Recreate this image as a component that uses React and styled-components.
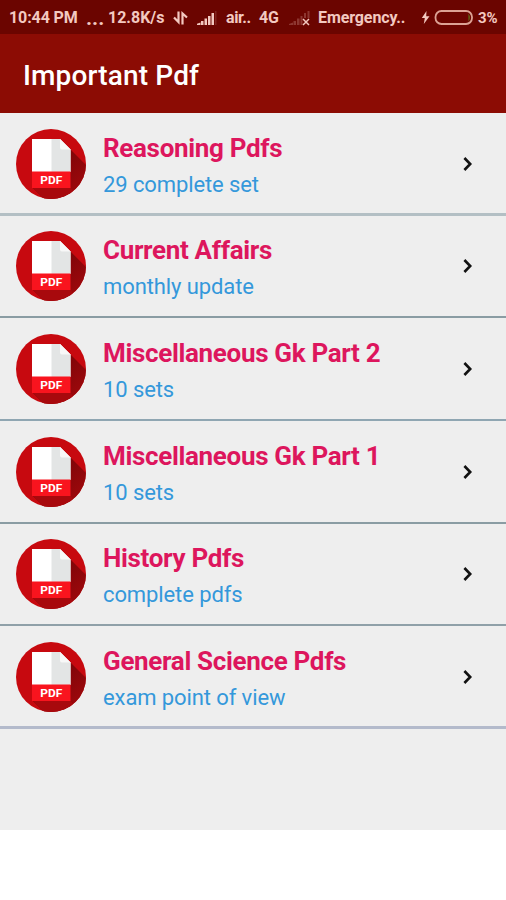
import React from 'react';
import styled, { createGlobalStyle } from 'styled-components';

const GlobalStyle = createGlobalStyle`
  body {
    margin: 0;
    background: #ffffff;
    font-family: Roboto, "Liberation Sans", sans-serif;
  }
`;

const Screen = styled.div`
  width: 506px;
  height: 830px;
  overflow: hidden;
  background: #eeeeee;
`;

const StatusBar = styled.div`
  display: flex;
  align-items: center;
  box-sizing: border-box;
  height: 34px;
  padding-left: 9px;
  background: #6b0500;
  color: #f3c9c0;
`;

const StatusText = styled.span`
  flex: none;
  width: ${props => props.$width}px;
  font-size: ${props => props.$size || 16}px;
  font-weight: 700;
  letter-spacing: ${props => props.$spacing || 0}px;
  line-height: 34px;
  padding-top: 2px;
  white-space: nowrap;
`;

const StatusIcon = styled.svg`
  flex: none;
  display: block;
  height: 34px;
  width: ${props => props.$width}px;
`;

const TitleBar = styled.div`
  display: flex;
  align-items: center;
  box-sizing: border-box;
  height: 79px;
  padding: 4px 0 0 23px;
  background: #8c0c04;
`;

const Title = styled.h1`
  margin: 0;
  font-size: 28px;
  font-weight: 500;
  line-height: 32px;
  letter-spacing: 0.15px;
  color: #ffffff;
`;

const Row = styled.div`
  display: flex;
  align-items: flex-start;
  box-sizing: border-box;
  height: 102.67px;
  padding: 14.8px 32px 0 15px;
  background: linear-gradient(${props => props.$line}, ${props => props.$line}) 0 100% / 100% ${props => (props.$thick ? 3 : 2)}px no-repeat;
`;

const PdfBadge = styled.svg`
  flex: none;
  display: block;
  width: 72px;
  height: 72px;
`;

const RowText = styled.div`
  flex: 1;
  padding: 3.8px 0 0 16px;
`;

const RowTitle = styled.div`
  font-size: 26px;
  font-weight: 700;
  line-height: 32px;
  letter-spacing: -0.33px;
  color: #dd165d;
`;

const RowSubtitle = styled.div`
  margin-top: 7px;
  font-size: 22px;
  line-height: 28px;
  letter-spacing: -0.1px;
  color: #3498db;
`;

const Chevron = styled.svg`
  flex: none;
  width: 12px;
  height: 16px;
  margin-top: 28px;
`;

const PdfIcon = () => (
  <PdfBadge viewBox="0 0 72 72">
    <defs>
      <clipPath id="disc"><circle cx="36" cy="36" r="35" /></clipPath>
      <linearGradient id="shade" x1="0" y1="0" x2="1" y2="1">
        <stop offset="0.3" stopColor="#7c0508" />
        <stop offset="1" stopColor="#a8090d" />
      </linearGradient>
    </defs>
    <circle cx="36" cy="36" r="35" fill="#c7090f" />
    <g clipPath="url(#disc)">
      <path d="M55 21L72 38V72H30L17 59H55Z" fill="url(#shade)" />
      <path d="M17 59H55L64 72H30Z" fill="#a8090d" />
    </g>
    <path d="M17 11H45L55.5 21.5V44H17Z" fill="#ffffff" />
    <path d="M36.5 11H45L55.5 21.5V44H36.5Z" fill="#e3e5e5" />
    <path d="M45 11L55.5 21.5H47Q45 21.5 45 19.5Z" fill="#f8f8f8" />
    <path d="M17 43.5H55.5V60H17Z" fill="#f9141e" />
    <text
      x="36.2"
      y="55.8"
      textAnchor="middle"
      textLength="22"
      lengthAdjust="spacingAndGlyphs"
      fill="#ffffff"
      fontFamily="Roboto, sans-serif"
      fontWeight="700"
      fontSize="10.8"
    >
      PDF
    </text>
  </PdfBadge>
);

const DataArrows = () => (
  <StatusIcon $width={24} viewBox="0 0 24 34" fill="none" stroke="#f3c9c0" strokeWidth="2.2">
    <path d="M5.5 11.5V22L1 17.5" />
    <path d="M9.5 24.5V13.5L14 17.5" />
  </StatusIcon>
);

const Signal = () => (
  <StatusIcon $width={29} viewBox="0 0 29 34" fill="#f3c9c0">
    <path d="M-1 24L3.5 22.5V25H-1Z" />
    <rect x="4" y="21" width="2.5" height="4" />
    <rect x="7.5" y="18.5" width="2.5" height="6.5" />
    <rect x="11" y="16" width="2.5" height="9" />
    <rect x="14.5" y="13" width="2.5" height="12" />
    <rect x="18.2" y="11" width="1.2" height="14" opacity="0.2" />
  </StatusIcon>
);

const NoSignal = () => (
  <StatusIcon $width={29} viewBox="0 0 29 34">
    <g fill="#f3c9c0" opacity="0.25">
      <path d="M0 24L4 22.5V25H0Z" />
      <rect x="4.5" y="21" width="2.5" height="4" />
      <rect x="8" y="18.5" width="2.5" height="6.5" />
      <rect x="11.5" y="16" width="2" height="9" />
      <rect x="15" y="13" width="2" height="5" />
      <rect x="18.5" y="11" width="2" height="7" />
    </g>
    <path d="M14 19L20 25M20 19L14 25" stroke="#f3c9c0" strokeWidth="1.5" />
  </StatusIcon>
);

const Battery = () => (
  <StatusIcon $width={57} viewBox="0 0 57 34">
    <path d="M5.5 11L0.8 18H3.8L2.8 24L8.5 16.2H5.2Z" fill="#f3c9c0" />
    <rect x="14.5" y="11" width="36.5" height="13" rx="6" fill="none" stroke="#dca294" strokeWidth="1.8" />
    <path d="M47.5 13.5Q50 17.5 47.5 21.5Z" fill="#5d7a16" />
  </StatusIcon>
);

const pdfs = [
  { title: 'Reasoning Pdfs', subtitle: '29 complete set', line: '#b3bfc4', thick: true },
  { title: 'Current Affairs', subtitle: 'monthly update', line: '#8a9ca3' },
  { title: 'Miscellaneous Gk Part 2', subtitle: '10 sets', line: '#8fa6b2' },
  { title: 'Miscellaneous Gk Part 1', subtitle: '10 sets', line: '#8a9ca3' },
  { title: 'History Pdfs', subtitle: 'complete pdfs', line: '#8fa0a8' },
  { title: 'General Science Pdfs', subtitle: 'exam point of view', line: '#b3bacb', thick: true },
];

const PdfRow = ({
  title, subtitle, line, thick,
}) => (
  <Row $line={line} $thick={thick}>
    <PdfIcon />
    <RowText>
      <RowTitle>{title}</RowTitle>
      <RowSubtitle>{subtitle}</RowSubtitle>
    </RowText>
    <Chevron viewBox="0 0 12 16" fill="none" stroke="#111111" strokeWidth="2.6">
      <path d="M2.4 2L8.2 8L2.4 14" />
    </Chevron>
  </Row>
);

const App = () => (
  <>
    <GlobalStyle />
    <Screen>
      <StatusBar>
        <StatusText $width={77} $spacing={-0.1}>10:44 PM</StatusText>
        <StatusText $width={22} $size={21}>...</StatusText>
        <StatusText $width={65}>12.8K/s</StatusText>
        <DataArrows />
        <Signal />
        <StatusText $width={33} $spacing={-0.4}>air..</StatusText>
        <StatusText $width={30} $spacing={-0.2}>4G</StatusText>
        <NoSignal />
        <StatusText $width={103} $spacing={-0.1}>Emergency..</StatusText>
        <Battery />
        <StatusText $width={24} $size={15} $spacing={-0.2}>3%</StatusText>
      </StatusBar>
      <TitleBar>
        <Title>Important Pdf</Title>
      </TitleBar>
      {pdfs.map(pdf => <PdfRow key={pdf.title} {...pdf} />)}
    </Screen>
  </>
);

export default App;
